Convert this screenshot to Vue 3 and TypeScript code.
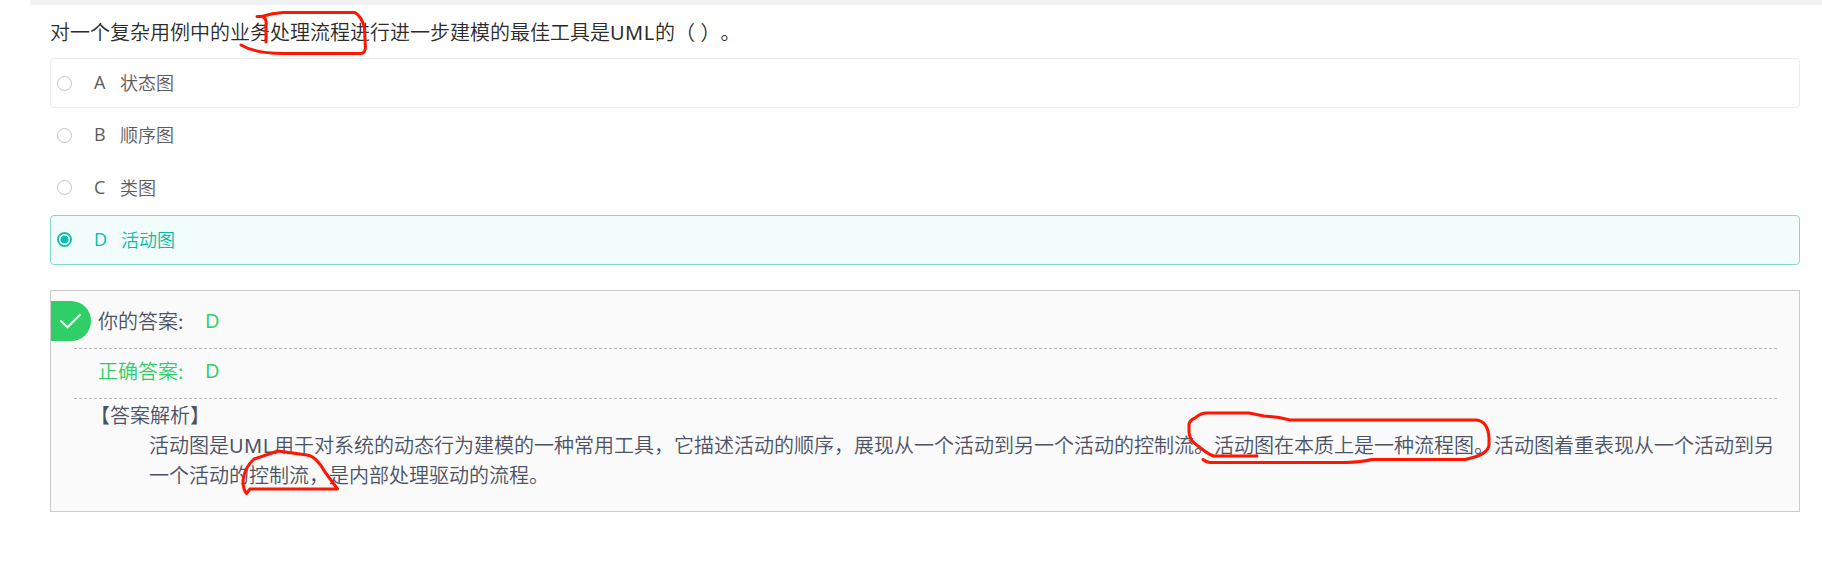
<script setup lang="ts">
interface Choice {
  key: string
  text: string
  outlined?: boolean
  selected?: boolean
}

const question = '对一个复杂用例中的业务处理流程进行进一步建模的最佳工具是'
const choices: Choice[] = [
  { key: 'A', text: '状态图', outlined: true },
  { key: 'B', text: '顺序图' },
  { key: 'C', text: '类图' },
  { key: 'D', text: '活动图', selected: true },
]
</script>

<template>
  <main class="page" lang="zh-CN">
    <div class="topbar"></div>
    <h1 class="question">{{ question }}<span class="latin">UML</span>的（ ）。</h1>
    <ul class="choices">
      <li
        v-for="c in choices"
        :key="c.key"
        class="choice"
        :class="{ outlined: c.outlined, selected: c.selected }"
      >
        <span class="radio"></span>
        <span class="key">{{ c.key }}</span>
        <span class="label">{{ c.text }}</span>
      </li>
    </ul>
    <section class="panel">
      <div class="row mine">
        <span class="badge">
          <svg width="40" height="40" viewBox="0 0 40 40">
            <path d="M9.3 19.5 16.5 26.3 29.5 13.3" fill="none" stroke="#fff" stroke-width="2" />
          </svg>
        </span>
        <span class="caption">你的答案:</span><span class="value">D</span>
      </div>
      <div class="row correct">
        <span class="caption">正确答案:</span><span class="value">D</span>
      </div>
      <div class="analysis">
        <div class="heading">【答案解析】</div>
        <p class="body">活动图是<span class="latin">UML</span>用于对系统的动态行为建模的一种常用工具，它描述活动的顺序，展现从一个活动到另一个活动的控制流。活动图在本质上是一种流程图。活动图着重表现从一个活动到另一个活动的控制流，是内部处理驱动的流程。</p>
      </div>
    </section>
    <svg class="ink" width="1822" height="572" viewBox="0 0 1822 572">
      <path d="M241 45C251 51 266 53.5 283 53.5H360Q366 53.5 365.3 46L364.5 28Q362 17 355 12.5H283Q272 13 262 16.5H257M262 16.5Q267 18 266 25V42" />
      <path d="M250 489H337.5L325 472Q316 456 307 455L278 451 254 459Q245 467 243 480 243 490 246.5 493.5L250 489" />
      <path d="M1257 456H1214Q1209 455 1198 446 1189 440 1189 432V424Q1190 420 1195 418 1201 413 1206 413H1249L1264 416 1279 417.5 1290 420H1476Q1488 421 1489 438V445Q1488 455 1465 459.5H1372Q1362 462 1346 462.5H1210Q1206 462 1203 459.5" />
    </svg>
  </main>
</template>

<style>
body {
  margin: 0;
  background: #fff;
}
</style>

<style scoped>
.page {
  position: relative;
  box-sizing: border-box;
  width: 1822px;
  height: 572px;
  padding: 0 22px 0 50px;
  overflow: hidden;
  font-family: "Noto Sans CJK SC", sans-serif;
  font-weight: 350;
  font-size: 20px;
  text-spacing-trim: space-all;
}
.topbar {
  height: 5px;
  margin: 0 -22px 0 -20px;
  background: #f1f1f1;
}
.question {
  margin: 0 0 11px;
  padding-top: 12px;
  height: 30px;
  line-height: 30px;
  font-size: 20px;
  font-weight: 350;
  color: #2b2b2b;
  white-space: pre;
  word-spacing: 1px;
}
.latin {
  display: inline-block;
  width: 45px;
  font-family: "Noto Sans", "Open Sans", sans-serif;
  font-weight: 400;
  letter-spacing: 0.5px;
  line-height: 1;
}
.choices {
  display: grid;
  gap: 2.33px;
  margin: 0 0 25px;
  padding: 0;
  list-style: none;
}
.choice {
  display: flex;
  align-items: center;
  box-sizing: border-box;
  height: 50px;
  padding-left: 6px;
  border: 1px solid transparent;
  border-radius: 4px;
  font-size: 18px;
  line-height: 24px;
  color: #5c5c5c;
}
.outlined {
  border-color: #ebebeb;
}
.selected {
  border-color: #7fdccf;
  background: #f2fcfb;
  color: #00bfa5;
}
.radio {
  box-sizing: border-box;
  width: 15px;
  height: 15px;
  border: 1px solid #c4c4c4;
  border-radius: 50%;
  background: #fff;
}
.selected .radio {
  border: 2px solid #12c2ae;
  background: radial-gradient(circle, #08c1ac 3.6px, #fff 4.4px);
}
.key {
  width: 26px;
  margin-left: 22px;
  padding-bottom: 2px;
  font-family: "Open Sans", "Noto Sans", sans-serif;
  font-weight: 400;
}
.label {
  padding-bottom: 2px;
}
.selected .key {
  width: 27px;
}
.panel {
  box-sizing: border-box;
  height: 222px;
  border: 1px solid #ccc;
  padding-top: 8px;
  background: #fafafa;
}
.row {
  position: relative;
  display: flex;
  align-items: center;
  box-sizing: border-box;
  height: 50px;
  margin: 0 22px 0 23px;
  padding: 0 0 6px 24px;
  border-bottom: 1px dashed #b8b8b8;
  color: #4b5264;
}
.badge {
  position: absolute;
  left: -23px;
  top: 2px;
  width: 40px;
  height: 40px;
  border-radius: 0 20px 20px 0;
  background: #2fce66;
}
.badge svg {
  display: block;
}
.caption {
  width: 107px;
}
.value {
  color: #2fce66;
  font-family: "Open Sans", "Noto Sans", sans-serif;
  font-weight: 400;
}
.correct {
  color: #2fce66;
}
.analysis {
  padding: 1px 24px 0 39px;
  line-height: 30px;
  color: #4b5264;
}
.body {
  margin: 0 0 0 59px;
}
.ink {
  position: absolute;
  left: 0;
  top: 0;
  fill: none;
  stroke: #ff1500;
  stroke-width: 3;
  stroke-linecap: round;
  stroke-linejoin: round;
  pointer-events: none;
}
</style>
